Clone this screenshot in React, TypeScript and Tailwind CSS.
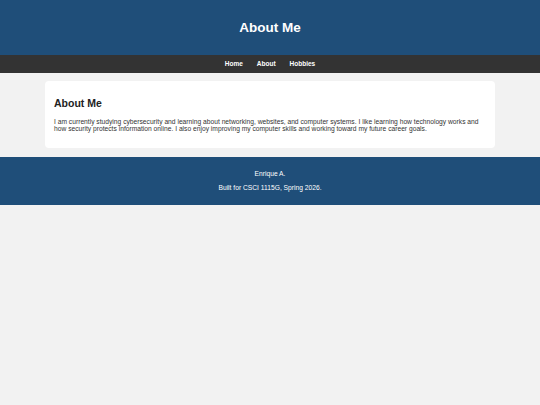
import React from 'react';

const App: React.FC = () => {
  return (
    <div className="min-h-[405px] bg-[#f2f2f2] font-['Liberation_Sans',Arial,sans-serif] text-[#222]">
      {/* Header */}
      <header className="h-[55px] bg-[#1f4e79] flex items-center justify-center">
        <h1 className="text-white font-bold text-[13.5px] leading-none">About Me</h1>
      </header>

      {/* Nav */}
      <nav className="h-[18px] bg-[#333333] flex items-center justify-center gap-[14px]">
        <a className="text-white font-bold text-[6.5px]">Home</a>
        <a className="text-white font-bold text-[6.5px]">About</a>
        <a className="text-white font-bold text-[6.5px]">Hobbies</a>
      </nav>

      {/* Content */}
      <main className="px-[45px] pt-[8px] pb-[9px]">
        <section className="bg-white rounded-[4px] h-[67px] px-[9px] pt-[17px]">
          <h2 className="font-bold text-[10.5px] leading-none text-[#222]">About Me</h2>
          <p className="mt-[9px] text-[6.7px] leading-[7px] text-[#333]">
            I am currently studying cybersecurity and learning about networking, websites, and computer systems. I like learning how technology works and how security protects information online. I also enjoy improving my computer skills and working toward my future career goals.
          </p>
        </section>
      </main>

      {/* Footer */}
      <footer className="h-[48px] bg-[#1f4e79] flex flex-col items-center justify-center gap-[7px] text-white text-[6.7px] leading-none">
        <p>Enrique A.</p>
        <p>Built for CSCI 1115G, Spring 2026.</p>
      </footer>
    </div>
  );
};

export default App;
